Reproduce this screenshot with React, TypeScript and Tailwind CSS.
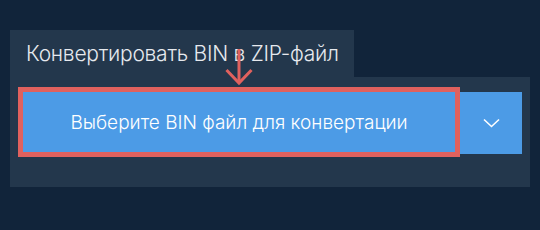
import React from "react";

export default function App() {
  return (
    <div className="w-[540px] h-[230px] bg-[#11243a] pt-[30px] pl-[10px] font-['Inter',sans-serif] relative">
      <div className="w-[344px] h-[47px] bg-[#23374c] flex items-center pl-[16px]">
        <span className="text-[21px] font-light text-[#e6e9ee] leading-none tracking-[-0.25px]">Конвертировать BIN в ZIP-файл</span>
      </div>
      <div className="w-[520px] h-[110px] bg-[#23374c] pt-[15px] pl-[13px] flex items-start">
        <div className="w-[432px] h-[60px] bg-[#4c9be6] outline outline-[5px] outline-[#e0615e] flex items-center justify-center">
          <span className="text-[19px] font-light text-white leading-none">Выберите BIN файл для конвертации</span>
        </div>
        <div className="ml-[5px] w-[62px] h-[62px] bg-[#4c9be6] flex items-center justify-center">
          <svg width="17" height="10" viewBox="0 0 17 10" fill="none">
            <path d="M1 1.5L8.5 8.5L16 1.5" stroke="white" strokeWidth="1.6" />
          </svg>
        </div>
      </div>
      <svg className="absolute left-[225px] top-[48px]" width="28" height="38" viewBox="0 0 28 38" fill="none">
        <path d="M14 1V35" stroke="#e0615e" strokeWidth="3" />
        <path d="M1.5 22L14 35L26.5 22" stroke="#e0615e" strokeWidth="3" />
      </svg>
    </div>
  );
}
